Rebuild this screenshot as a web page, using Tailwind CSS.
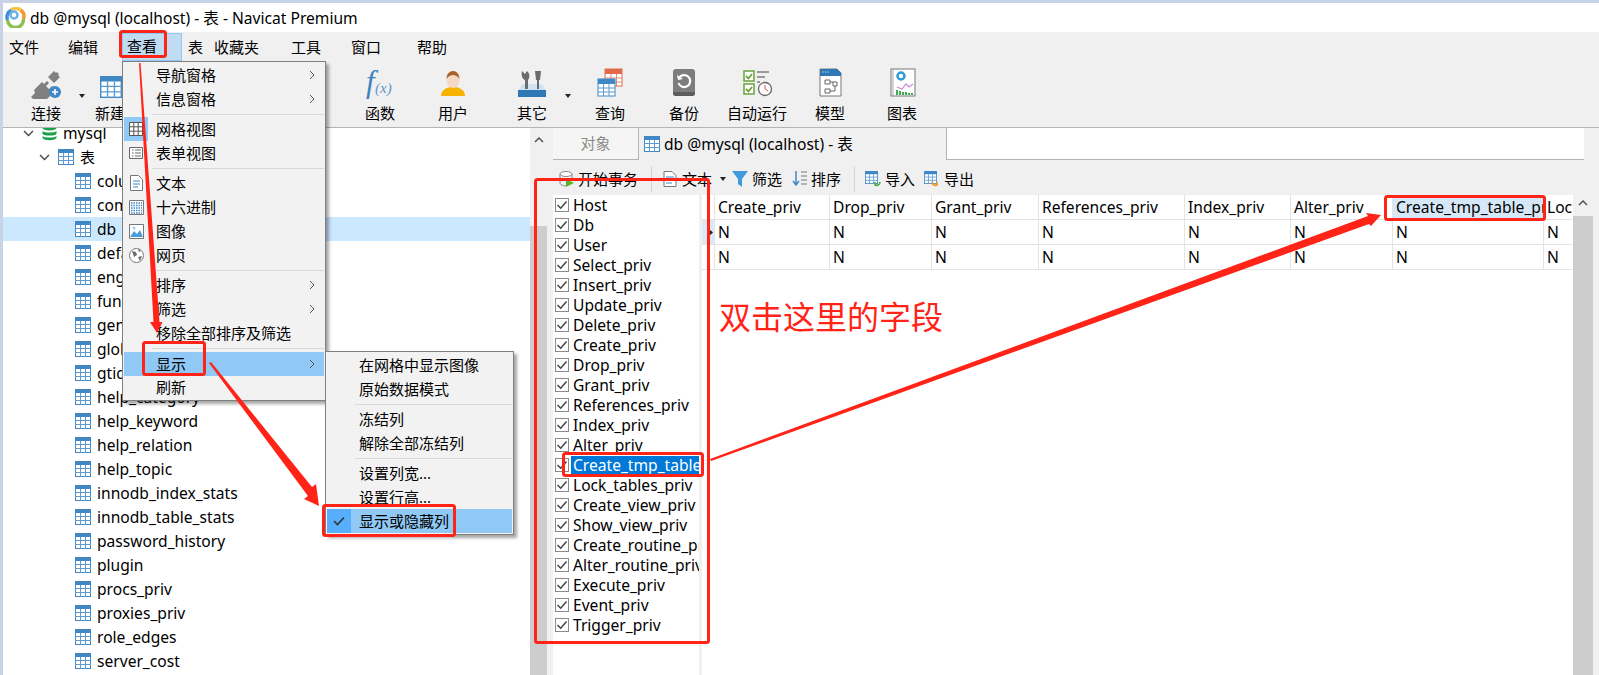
<!DOCTYPE html>
<html lang="zh-CN">
<head>
<meta charset="UTF-8">
<title>db @mysql (localhost) - 表 - Navicat Premium</title>
<script src="https://cdn.jsdelivr.net/npm/@tailwindcss/browser@4"></script>
</head>
<body class="relative w-[1599px] h-[675px] overflow-hidden bg-[#c9d3e6] pl-[3px] pt-[3px] text-[15px] leading-[24px] text-black font-['Noto_Sans','Noto_Sans_CJK_SC',sans-serif]">

<!-- shared icons -->
<svg class="hidden">
  <symbol id="tbl" viewBox="0 0 16 16">
    <rect x="0.5" y="0.5" width="15" height="15" fill="#fff" stroke="#3f87c5"/>
    <rect x="0" y="0" width="16" height="4" fill="#3f87c5"/>
    <path d="M5.5 4v12M10.5 4v12M0 7.5h16M0 11.5h16" stroke="#5d9ad0" fill="none"/>
  </symbol>
  <symbol id="chk" viewBox="0 0 14 14">
    <rect x="0.5" y="0.5" width="13" height="13" fill="#fff" stroke="#8a8a8a"/>
    <path d="M2.5 7l3.2 3.2L11.5 3.5" stroke="#444" stroke-width="1.5" fill="none"/>
  </symbol>
</svg>

<div class="flex flex-col h-[672px] bg-white">
  <!-- title bar -->
  <div class="h-[29px] flex items-center pl-[2px] bg-white text-[15.6px]">
    <svg class="w-[21px] h-[21px] shrink-0" viewBox="0 0 21 21" fill="none" stroke-width="3.500">
      <path d="M2.500 13a8 8 0 0 1 4-10" stroke="#3f8fdc"/><path d="M6.500 3a8 8 0 0 1 9 0" stroke="#f5c542"/>
      <path d="M15.500 3a8 8 0 0 1 3 9" stroke="#f29a33"/><path d="M18.500 12a8 8 0 0 1-16 1" stroke="#8cc152"/>
      <circle cx="9" cy="8" r="3.500" stroke="#6cb2ea" stroke-width="2.500"/>
    </svg>
    <span class="ml-[4px]">db @mysql (localhost) - 表 - Navicat Premium</span>
  </div>

  <!-- menu bar -->
  <div class="h-[29px] flex items-center bg-[#f0f0f0]">
    <span class="ml-[6px]">文件</span>
    <span class="ml-[29px]">编辑</span>
    <span class="ml-[24px] h-[28px] w-[60px] pl-[4px] bg-[#c0dcf3] border border-[#90c8f6]">查看</span>
    <span class="ml-[6px]">表</span>
    <span class="ml-[11px]">收藏夹</span>
    <span class="ml-[32px]">工具</span>
    <span class="ml-[30px]">窗口</span>
    <span class="ml-[36px]">帮助</span>
  </div>

  <!-- main toolbar -->
  <div class="h-[67px] flex pl-[8px] bg-[#f0f0f0] border-b border-[#b4b4b4]">
    <div class="relative w-[70px] flex flex-col items-center">
      <svg class="w-[32px] h-[30px] mt-[8px]" viewBox="0 0 32 30">
        <path d="M1 28l4-4-1-3 8-8 2 2 3-3 2 2-3 3 3 3 3-3 2 2-3 3 2 2-8 8-3-1-4 4z" fill="#808080"/>
        <path d="M18 8l6-6 2 2 1-1 2 2-1 1 2 2-6 6z" fill="#808080"/>
        <circle cx="25" cy="23" r="6" fill="#3f87c5"/><path d="M25 20v6M22 23h6" stroke="#fff" stroke-width="1.600"/>
      </svg>
      <span class="mt-[2px]">连接</span>
      <svg class="absolute left-[68px] top-[33px] w-[6px] h-[4px]" viewBox="0 0 6 4"><path d="M0 0h6L3 4z" fill="#222"/></svg>
    </div>
    <div class="w-[58px] flex flex-col items-center">
      <svg class="w-[32px] h-[30px] mt-[8px]" viewBox="0 0 32 30"><use href="#tbl" x="6" y="7" width="22" height="22"/></svg>
      <span class="mt-[2px]">新建</span>
    </div>
    <div class="ml-[206px] w-[70px] flex flex-col items-center">
      <svg class="w-[32px] h-[30px] mt-[8px]" viewBox="0 0 32 30">
        <text x="2" y="23" fill="#3c82bd" font-family="Liberation Serif" font-style="italic" font-size="31">f</text>
        <text x="11" y="24" fill="#5c97c9" font-family="Liberation Serif" font-style="italic" font-size="15">(x)</text>
      </svg>
      <span class="mt-[2px]">函数</span>
    </div>
    <div class="ml-[3px] w-[70px] flex flex-col items-center">
      <svg class="w-[32px] h-[30px] mt-[8px]" viewBox="0 0 32 30">
        <path d="M4 27c0-6 5-8 9-9h6c4 1 9 3 9 9z" fill="#f6b400"/>
        <ellipse cx="16" cy="11" rx="6.500" ry="8" fill="#f4d8c4"/>
        <path d="M9.500 10c0-5 3-8 6.500-8s6.500 3 6.500 8c-2-3-4-4-6.500-4s-4.500 1-6.500 4z" fill="#a8622a"/>
      </svg>
      <span class="mt-[2px]">用户</span>
    </div>
    <div class="relative ml-[9px] w-[70px] flex flex-col items-center">
      <svg class="w-[32px] h-[30px] mt-[8px]" viewBox="0 0 32 30">
        <path d="M6 15h20l4 7H2z" fill="#cfe2f2"/><rect x="2" y="21" width="28" height="7" fill="#2f78b7"/>
        <path d="M9 20V11C6 10 5 6 6 2l3 3 2-3c3 2 3 7 1 9v9zM21 20V11h-1l-1-9h6l-1 9h-1v9z" fill="#6b6b6b"/>
      </svg>
      <span class="mt-[2px]">其它</span>
      <svg class="absolute left-[68px] top-[33px] w-[6px] h-[4px]" viewBox="0 0 6 4"><path d="M0 0h6L3 4z" fill="#222"/></svg>
    </div>
    <div class="ml-[8px] w-[70px] flex flex-col items-center">
      <svg class="w-[32px] h-[30px] mt-[7px]" viewBox="0 0 32 30">
        <rect x="11" y="1" width="17" height="17" fill="#fff" stroke="#e2694a"/><rect x="11" y="1" width="17" height="5" fill="#e2694a"/>
        <path d="M17 6v12M22.500 6v12M11 10h17M11 14h17" stroke="#e2897a" fill="none"/>
        <rect x="4" y="11" width="17" height="17" fill="#fff" stroke="#3f87c5"/><rect x="4" y="11" width="17" height="5" fill="#3f87c5"/>
        <path d="M9.500 16v12M15 16v12M4 20h17M4 24h17" stroke="#5d9ad0" fill="none"/>
      </svg>
      <span class="mt-[3px]">查询</span>
    </div>
    <div class="ml-[4px] w-[70px] flex flex-col items-center">
      <svg class="w-[32px] h-[30px] mt-[7px]" viewBox="0 0 32 30">
        <rect x="5" y="1" width="22" height="27" rx="3" fill="#7d7d7d"/>
        <path d="M5 24h22v1a3 3 0 0 1-3 3H8a3 3 0 0 1-3-3z" fill="#5d5d5d"/>
        <path d="M11 10a6 6 0 1 1-.5 5" stroke="#fff" stroke-width="2.200" fill="none"/><path d="M9 7l1 5 5-1z" fill="#fff"/>
      </svg>
      <span class="mt-[3px]">备份</span>
    </div>
    <div class="ml-[-2px] w-[80px] flex flex-col items-center">
      <svg class="w-[32px] h-[30px] mt-[7px]" viewBox="0 0 32 30">
        <rect x="3" y="3" width="10" height="10" fill="#fff" stroke="#6aa33b" stroke-width="1.500"/><path d="M5 8l2.500 2.500L11 6" stroke="#6aa33b" stroke-width="1.800" fill="none"/>
        <rect x="3" y="16" width="10" height="10" fill="#fff" stroke="#6aa33b" stroke-width="1.500"/><path d="M5 21l2.500 2.500L11 19" stroke="#6aa33b" stroke-width="1.800" fill="none"/>
        <path d="M16 4h12M16 9h8M16 14h3" stroke="#999" stroke-width="1.800"/>
        <circle cx="24" cy="21" r="6.500" fill="#fff" stroke="#666" stroke-width="1.300"/><path d="M24 17v4l3 2" stroke="#d0574a" fill="none"/>
      </svg>
      <span class="mt-[3px]">自动运行</span>
    </div>
    <div class="w-[66px] flex flex-col items-center">
      <svg class="w-[32px] h-[30px] mt-[7px]" viewBox="0 0 32 30">
        <path d="M6 1h17l4 4v23H6z" fill="#fff" stroke="#777"/><path d="M6 1h17l4 4v3H6z" fill="#2f78b7"/>
        <path d="M8.500 4h1M11 4h1M13.500 4h1" stroke="#fff"/>
        <path d="M11 12h5v4h-5zM19 14h4v4h-4zM11 21h5v4h-5zM16 14h3M21 18v5h-5" stroke="#666" fill="none"/>
      </svg>
      <span class="mt-[3px]">模型</span>
    </div>
    <div class="ml-[7px] w-[64px] flex flex-col items-center">
      <svg class="w-[32px] h-[30px] mt-[7px]" viewBox="0 0 32 30">
        <rect x="5" y="1" width="24" height="27" fill="#fff" stroke="#777"/><path d="M7 1v27" stroke="#aaa"/>
        <circle cx="15" cy="8" r="3.500" fill="none" stroke="#2f9bd6" stroke-width="2.500"/>
        <path d="M11 19l5 2 4-5 3 3 4-3" stroke="#c88ad8" stroke-width="1.200" fill="none"/>
        <path d="M11 22v5M14 23v4M17 24v3M20 24v3M23 25v2M26 25v2" stroke="#3cab53" stroke-width="2"/>
      </svg>
      <span class="mt-[3px]">图表</span>
    </div>
  </div>

  <div class="flex-1 min-h-0 flex">
    <!-- object tree -->
    <div class="w-[527px] overflow-hidden bg-white text-[15.6px]">
      <ul class="mt-[-7px] leading-[24px]">
        <li class="h-[24px] flex items-center pl-[20px]">
          <svg class="w-[11px] h-[7px]" viewBox="0 0 11 7"><path d="M1 1l4.500 4.500L10 1" stroke="#444" stroke-width="1.400" fill="none"/></svg>
          <svg class="ml-[8px] w-[15px] h-[16px]" viewBox="0 0 15 16"><ellipse cx="7.500" cy="3" rx="7" ry="2.500" fill="#19a04b"/><path d="M.5 6c2 2 12 2 14 0v3c-2 2-12 2-14 0zM.5 11c2 2 12 2 14 0v2c-2 3-12 3-14 0z" fill="#19a04b"/></svg>
          <span class="ml-[6px]">mysql</span>
        </li>
        <li class="h-[24px] flex items-center pl-[36px]">
          <svg class="w-[11px] h-[7px]" viewBox="0 0 11 7"><path d="M1 1l4.500 4.500L10 1" stroke="#444" stroke-width="1.400" fill="none"/></svg>
          <svg class="ml-[8px] w-[16px] h-[16px]"><use href="#tbl"/></svg><span class="ml-[6px] text-[15px]">表</span>
        </li>
        <li class="h-[24px] flex items-center pl-[72px]"><svg class="w-[16px] h-[16px]"><use href="#tbl"/></svg><span class="ml-[6px]">columns_priv</span></li>
        <li class="h-[24px] flex items-center pl-[72px]"><svg class="w-[16px] h-[16px]"><use href="#tbl"/></svg><span class="ml-[6px]">component</span></li>
        <li class="h-[24px] flex items-center pl-[72px] bg-[#cce8ff]"><svg class="w-[16px] h-[16px]"><use href="#tbl"/></svg><span class="ml-[6px]">db</span></li>
        <li class="h-[24px] flex items-center pl-[72px]"><svg class="w-[16px] h-[16px]"><use href="#tbl"/></svg><span class="ml-[6px]">default_roles</span></li>
        <li class="h-[24px] flex items-center pl-[72px]"><svg class="w-[16px] h-[16px]"><use href="#tbl"/></svg><span class="ml-[6px]">engine_cost</span></li>
        <li class="h-[24px] flex items-center pl-[72px]"><svg class="w-[16px] h-[16px]"><use href="#tbl"/></svg><span class="ml-[6px]">func</span></li>
        <li class="h-[24px] flex items-center pl-[72px]"><svg class="w-[16px] h-[16px]"><use href="#tbl"/></svg><span class="ml-[6px]">general_log</span></li>
        <li class="h-[24px] flex items-center pl-[72px]"><svg class="w-[16px] h-[16px]"><use href="#tbl"/></svg><span class="ml-[6px]">global_grants</span></li>
        <li class="h-[24px] flex items-center pl-[72px]"><svg class="w-[16px] h-[16px]"><use href="#tbl"/></svg><span class="ml-[6px]">gtid_executed</span></li>
        <li class="h-[24px] flex items-center pl-[72px]"><svg class="w-[16px] h-[16px]"><use href="#tbl"/></svg><span class="ml-[6px]">help_category</span></li>
        <li class="h-[24px] flex items-center pl-[72px]"><svg class="w-[16px] h-[16px]"><use href="#tbl"/></svg><span class="ml-[6px]">help_keyword</span></li>
        <li class="h-[24px] flex items-center pl-[72px]"><svg class="w-[16px] h-[16px]"><use href="#tbl"/></svg><span class="ml-[6px]">help_relation</span></li>
        <li class="h-[24px] flex items-center pl-[72px]"><svg class="w-[16px] h-[16px]"><use href="#tbl"/></svg><span class="ml-[6px]">help_topic</span></li>
        <li class="h-[24px] flex items-center pl-[72px]"><svg class="w-[16px] h-[16px]"><use href="#tbl"/></svg><span class="ml-[6px]">innodb_index_stats</span></li>
        <li class="h-[24px] flex items-center pl-[72px]"><svg class="w-[16px] h-[16px]"><use href="#tbl"/></svg><span class="ml-[6px]">innodb_table_stats</span></li>
        <li class="h-[24px] flex items-center pl-[72px]"><svg class="w-[16px] h-[16px]"><use href="#tbl"/></svg><span class="ml-[6px]">password_history</span></li>
        <li class="h-[24px] flex items-center pl-[72px]"><svg class="w-[16px] h-[16px]"><use href="#tbl"/></svg><span class="ml-[6px]">plugin</span></li>
        <li class="h-[24px] flex items-center pl-[72px]"><svg class="w-[16px] h-[16px]"><use href="#tbl"/></svg><span class="ml-[6px]">procs_priv</span></li>
        <li class="h-[24px] flex items-center pl-[72px]"><svg class="w-[16px] h-[16px]"><use href="#tbl"/></svg><span class="ml-[6px]">proxies_priv</span></li>
        <li class="h-[24px] flex items-center pl-[72px]"><svg class="w-[16px] h-[16px]"><use href="#tbl"/></svg><span class="ml-[6px]">role_edges</span></li>
        <li class="h-[24px] flex items-center pl-[72px]"><svg class="w-[16px] h-[16px]"><use href="#tbl"/></svg><span class="ml-[6px]">server_cost</span></li>
      </ul>
    </div>

    <!-- tree scrollbar -->
    <div class="w-[23px] flex flex-col bg-[#f0f0f0]">
      <div class="h-[98px] pt-[9px] pl-[4px]">
        <svg class="w-[10px] h-[6px]" viewBox="0 0 10 6"><path d="M1 5l4-4 4 4" stroke="#555" stroke-width="1.500" fill="none"/></svg>
      </div>
      <div class="flex-1 w-[17px] bg-[#cdcdcd]"></div>
    </div>

    <!-- right panel -->
    <div class="flex-1 min-w-0 flex flex-col bg-[#f0f0f0]">
      <div class="h-[32px] flex">
        <div class="w-[86px] bg-[#f5f5f5] border-r border-b border-[#b4b4b4] text-center text-[#8a8a8a] leading-[30px]">对象</div>
        <div class="w-[307px] bg-[#f0f0f0] flex items-center pl-[5px] pb-[1px] text-[15.6px]">
          <svg class="w-[16px] h-[16px]"><use href="#tbl"/></svg><span class="ml-[4px]">db @mysql (localhost) - 表</span>
        </div>
        <div class="w-[638px] bg-white border-l border-b border-[#b4b4b4]"></div>
      </div>

      <div class="h-[35px] pt-[3px] flex items-center">
        <svg class="ml-[6px] w-[16px] h-[16px]" viewBox="0 0 16 16"><ellipse cx="7" cy="3" rx="6" ry="2.500" fill="#fff" stroke="#888"/><path d="M1 3v9c0 2 4 3 6 3M13 3v4M1 7.500c1 1.500 9 2 12 0" stroke="#888" fill="none"/><path d="M7 8l8 4-8 4z" fill="#5ab52d"/></svg>
        <span class="ml-[3px]">开始事务</span>
        <span class="ml-[13px] h-[26px] w-px bg-[#d4d4d4]"></span>
        <svg class="ml-[11px] w-[14px] h-[16px]" viewBox="0 0 14 16"><path d="M1 .5h8l4 4V15.500H1z" fill="#fff" stroke="#777"/><path d="M3 6h8M3 9h8M3 12h6" stroke="#3f87c5"/></svg>
        <span class="ml-[5px]">文本</span>
        <svg class="ml-[8px] w-[6px] h-[4px]" viewBox="0 0 6 4"><path d="M0 0h6L3 4z" fill="#222"/></svg>
        <svg class="ml-[6px] w-[16px] h-[16px]" viewBox="0 0 16 16"><path d="M0 0h16l-6 8v8l-4-3V8z" fill="#3f9bdc"/></svg>
        <span class="ml-[4px]">筛选</span>
        <svg class="ml-[10px] w-[16px] h-[16px]" viewBox="0 0 16 16"><path d="M4 0v13M1 10l3 4 3-4" stroke="#3f87c5" stroke-width="1.500" fill="none"/><path d="M9 1h6M9 5h6M9 9h6M9 13h6" stroke="#777"/></svg>
        <span class="ml-[3px]">排序</span>
        <span class="ml-[13px] h-[26px] w-px bg-[#d4d4d4]"></span>
        <svg class="ml-[10px] w-[16px] h-[16px]" viewBox="0 0 16 16"><use href="#tbl" width="13" height="13"/><path d="M15 11c0 3-3 4-5 3M10 11v3h3" stroke="#4cae4c" stroke-width="1.600" fill="none"/></svg>
        <span class="ml-[4px]">导入</span>
        <svg class="ml-[9px] w-[16px] h-[16px]" viewBox="0 0 16 16"><use href="#tbl" width="13" height="13"/><path d="M8 11c0 3 3 4 5 3M13 11v3h-3" stroke="#f0961e" stroke-width="1.600" fill="none"/></svg>
        <span class="ml-[4px]">导出</span>
      </div>

      <div class="flex-1 min-h-0 flex">
        <!-- column chooser -->
        <ul class="w-[146px] bg-white leading-[20px] overflow-hidden text-[15.6px]">
          <li class="h-[20px] flex items-center pl-[2px]"><svg class="shrink-0 w-[14px] h-[14px]"><use href="#chk"/></svg><span class="ml-[4px] whitespace-nowrap">Host</span></li>
          <li class="h-[20px] flex items-center pl-[2px]"><svg class="shrink-0 w-[14px] h-[14px]"><use href="#chk"/></svg><span class="ml-[4px] whitespace-nowrap">Db</span></li>
          <li class="h-[20px] flex items-center pl-[2px]"><svg class="shrink-0 w-[14px] h-[14px]"><use href="#chk"/></svg><span class="ml-[4px] whitespace-nowrap">User</span></li>
          <li class="h-[20px] flex items-center pl-[2px]"><svg class="shrink-0 w-[14px] h-[14px]"><use href="#chk"/></svg><span class="ml-[4px] whitespace-nowrap">Select_priv</span></li>
          <li class="h-[20px] flex items-center pl-[2px]"><svg class="shrink-0 w-[14px] h-[14px]"><use href="#chk"/></svg><span class="ml-[4px] whitespace-nowrap">Insert_priv</span></li>
          <li class="h-[20px] flex items-center pl-[2px]"><svg class="shrink-0 w-[14px] h-[14px]"><use href="#chk"/></svg><span class="ml-[4px] whitespace-nowrap">Update_priv</span></li>
          <li class="h-[20px] flex items-center pl-[2px]"><svg class="shrink-0 w-[14px] h-[14px]"><use href="#chk"/></svg><span class="ml-[4px] whitespace-nowrap">Delete_priv</span></li>
          <li class="h-[20px] flex items-center pl-[2px]"><svg class="shrink-0 w-[14px] h-[14px]"><use href="#chk"/></svg><span class="ml-[4px] whitespace-nowrap">Create_priv</span></li>
          <li class="h-[20px] flex items-center pl-[2px]"><svg class="shrink-0 w-[14px] h-[14px]"><use href="#chk"/></svg><span class="ml-[4px] whitespace-nowrap">Drop_priv</span></li>
          <li class="h-[20px] flex items-center pl-[2px]"><svg class="shrink-0 w-[14px] h-[14px]"><use href="#chk"/></svg><span class="ml-[4px] whitespace-nowrap">Grant_priv</span></li>
          <li class="h-[20px] flex items-center pl-[2px]"><svg class="shrink-0 w-[14px] h-[14px]"><use href="#chk"/></svg><span class="ml-[4px] whitespace-nowrap">References_priv</span></li>
          <li class="h-[20px] flex items-center pl-[2px]"><svg class="shrink-0 w-[14px] h-[14px]"><use href="#chk"/></svg><span class="ml-[4px] whitespace-nowrap">Index_priv</span></li>
          <li class="h-[20px] flex items-center pl-[2px]"><svg class="shrink-0 w-[14px] h-[14px]"><use href="#chk"/></svg><span class="ml-[4px] whitespace-nowrap">Alter_priv</span></li>
          <li class="h-[20px] flex items-center pl-[2px]"><svg class="shrink-0 w-[14px] h-[14px]"><use href="#chk"/></svg><span class="ml-[2px] pl-[2px] h-[18px] leading-[18px] flex-1 min-w-0 overflow-hidden bg-[#0078d7] text-white whitespace-nowrap">Create_tmp_table_priv</span></li>
          <li class="h-[20px] flex items-center pl-[2px]"><svg class="shrink-0 w-[14px] h-[14px]"><use href="#chk"/></svg><span class="ml-[4px] whitespace-nowrap">Lock_tables_priv</span></li>
          <li class="h-[20px] flex items-center pl-[2px]"><svg class="shrink-0 w-[14px] h-[14px]"><use href="#chk"/></svg><span class="ml-[4px] whitespace-nowrap">Create_view_priv</span></li>
          <li class="h-[20px] flex items-center pl-[2px]"><svg class="shrink-0 w-[14px] h-[14px]"><use href="#chk"/></svg><span class="ml-[4px] whitespace-nowrap">Show_view_priv</span></li>
          <li class="h-[20px] flex items-center pl-[2px]"><svg class="shrink-0 w-[14px] h-[14px]"><use href="#chk"/></svg><span class="ml-[4px] whitespace-nowrap">Create_routine_priv</span></li>
          <li class="h-[20px] flex items-center pl-[2px]"><svg class="shrink-0 w-[14px] h-[14px]"><use href="#chk"/></svg><span class="ml-[4px] whitespace-nowrap">Alter_routine_priv</span></li>
          <li class="h-[20px] flex items-center pl-[2px]"><svg class="shrink-0 w-[14px] h-[14px]"><use href="#chk"/></svg><span class="ml-[4px] whitespace-nowrap">Execute_priv</span></li>
          <li class="h-[20px] flex items-center pl-[2px]"><svg class="shrink-0 w-[14px] h-[14px]"><use href="#chk"/></svg><span class="ml-[4px] whitespace-nowrap">Event_priv</span></li>
          <li class="h-[20px] flex items-center pl-[2px]"><svg class="shrink-0 w-[14px] h-[14px]"><use href="#chk"/></svg><span class="ml-[4px] whitespace-nowrap">Trigger_priv</span></li>
        </ul>
        <div class="w-[3px] bg-[#f0f0f0]"></div>

        <!-- data grid -->
        <div class="w-[871px] bg-white text-[15.6px]">
          <div class="grid grid-cols-[13px_115px_102px_107px_146px_106px_102px_151px_29px] h-[25px] leading-[24px] border-b border-[#e4e4e4]">
            <div class="border-r border-[#e4e4e4]"></div>
            <div class="pl-[3px] border-r border-[#e4e4e4]">Create_priv</div>
            <div class="pl-[3px] border-r border-[#e4e4e4]">Drop_priv</div>
            <div class="pl-[3px] border-r border-[#e4e4e4]">Grant_priv</div>
            <div class="pl-[3px] border-r border-[#e4e4e4]">References_priv</div>
            <div class="pl-[3px] border-r border-[#e4e4e4]">Index_priv</div>
            <div class="pl-[3px] border-r border-[#e4e4e4]">Alter_priv</div>
            <div class="pl-[3px] border-r border-[#e4e4e4] bg-[#d6e8f8] overflow-hidden whitespace-nowrap">Create_tmp_table_priv</div>
            <div class="pl-[3px] overflow-hidden whitespace-nowrap">Lock_tables_priv</div>
          </div>
          <div class="grid grid-cols-[13px_115px_102px_107px_146px_106px_102px_151px_29px] h-[25px] leading-[24px] border-b border-[#e4e4e4]">
            <div class="relative border-r border-[#e4e4e4] bg-[#dce9f6]"><svg class="absolute left-[7px] top-[9px] w-[4px] h-[7px]" viewBox="0 0 4 7"><path d="M0 0l4 3.500L0 7z" fill="#222"/></svg></div>
            <div class="pl-[3px] border-r border-[#e4e4e4]">N</div>
            <div class="pl-[3px] border-r border-[#e4e4e4]">N</div>
            <div class="pl-[3px] border-r border-[#e4e4e4]">N</div>
            <div class="pl-[3px] border-r border-[#e4e4e4]">N</div>
            <div class="pl-[3px] border-r border-[#e4e4e4]">N</div>
            <div class="pl-[3px] border-r border-[#e4e4e4]">N</div>
            <div class="pl-[3px] border-r border-[#e4e4e4]">N</div>
            <div class="pl-[3px]">N</div>
          </div>
          <div class="grid grid-cols-[13px_115px_102px_107px_146px_106px_102px_151px_29px] h-[25px] leading-[24px] border-b border-[#e4e4e4]">
            <div class="border-r border-[#e4e4e4]"></div>
            <div class="pl-[3px] border-r border-[#e4e4e4]">N</div>
            <div class="pl-[3px] border-r border-[#e4e4e4]">N</div>
            <div class="pl-[3px] border-r border-[#e4e4e4]">N</div>
            <div class="pl-[3px] border-r border-[#e4e4e4]">N</div>
            <div class="pl-[3px] border-r border-[#e4e4e4]">N</div>
            <div class="pl-[3px] border-r border-[#e4e4e4]">N</div>
            <div class="pl-[3px] border-r border-[#e4e4e4]">N</div>
            <div class="pl-[3px]">N</div>
          </div>
        </div>

        <!-- grid scrollbar -->
        <div class="w-[20px] flex flex-col bg-[#f0f0f0]">
          <div class="h-[21px] pt-[5px] pl-[5px]">
            <svg class="w-[10px] h-[6px]" viewBox="0 0 10 6"><path d="M1 5l4-4 4 4" stroke="#555" stroke-width="1.500" fill="none"/></svg>
          </div>
          <div class="flex-1 bg-[#cdcdcd]"></div>
        </div>
      </div>
    </div>
  </div>
</div>

<!-- 查看 menu -->
<div class="absolute left-[122px] top-[61px] w-[204px] h-[340px] pt-[1px] bg-[#f2f2f2] border border-[#7f7f7f] shadow-[3px_3px_3px_rgba(0,0,0,0.35)]">
  <div class="h-[24px] flex items-center pl-[33px] pr-[10px]"><span class="flex-1">导航窗格</span><svg class="w-[6px] h-[10px]" viewBox="0 0 6 10"><path d="M1 1l4 4-4 4" stroke="#555" fill="none"/></svg></div>
  <div class="h-[24px] flex items-center pl-[33px] pr-[10px]"><span class="flex-1">信息窗格</span><svg class="w-[6px] h-[10px]" viewBox="0 0 6 10"><path d="M1 1l4 4-4 4" stroke="#555" fill="none"/></svg></div>
  <div class="h-[6px] ml-[29px] mr-[1px] flex items-center"><div class="h-px w-full bg-[#d8d8d8]"></div></div>
  <div class="h-[24px] flex items-center pr-[10px]">
    <div class="ml-[1px] w-[24px] h-[24px] bg-[#90c8f6] flex items-center justify-center"><svg class="w-[14px] h-[14px]" viewBox="0 0 14 14"><path d="M.5.5h13v13H.5zM4.800.5v13M9.200.5v13M.5 4.800h13M.5 9.200h13" stroke="#555" fill="#fff"/></svg></div>
    <span class="ml-[8px]">网格视图</span>
  </div>
  <div class="h-[24px] flex items-center">
    <div class="ml-[1px] w-[24px] flex justify-center"><svg class="w-[14px] h-[12px]" viewBox="0 0 14 12"><path d="M.5.5h13v11H.5z" fill="#fff" stroke="#666"/><path d="M3 3h1.500M3 6h1.500M3 9h1.500M6 3h6M6 6h6M6 9h6" stroke="#666"/></svg></div>
    <span class="ml-[8px]">表单视图</span>
  </div>
  <div class="h-[6px] ml-[29px] mr-[1px] flex items-center"><div class="h-px w-full bg-[#d8d8d8]"></div></div>
  <div class="h-[24px] flex items-center">
    <div class="ml-[1px] w-[24px] flex justify-center"><svg class="w-[13px] h-[16px]" viewBox="0 0 13 16"><path d="M.5.5h8l4 4v11H.5z" fill="#fff" stroke="#777"/><path d="M3 6h7M3 9h7M3 12h5" stroke="#3f87c5"/></svg></div>
    <span class="ml-[8px]">文本</span>
  </div>
  <div class="h-[24px] flex items-center">
    <div class="ml-[1px] w-[24px] flex justify-center"><svg class="w-[15px] h-[15px]" viewBox="0 0 15 15"><path d="M.5.5h14v14H.5z" fill="#fff" stroke="#777"/><path d="M2 3h11M2 5.500h11M2 8h11M2 10.500h11M2 13h11" stroke="#3f87c5" stroke-dasharray="1.500 1" stroke-width="1.500"/></svg></div>
    <span class="ml-[8px]">十六进制</span>
  </div>
  <div class="h-[24px] flex items-center">
    <div class="ml-[1px] w-[24px] flex justify-center"><svg class="w-[15px] h-[15px]" viewBox="0 0 15 15"><path d="M.5.5h14v14H.5z" fill="#fff" stroke="#777"/><path d="M1 13l4-6 3 3 3-4 3 7z" fill="#4d9fdc"/><circle cx="5" cy="4" r="1.500" fill="#9ccbed"/></svg></div>
    <span class="ml-[8px]">图像</span>
  </div>
  <div class="h-[24px] flex items-center">
    <div class="ml-[1px] w-[24px] flex justify-center"><svg class="w-[15px] h-[15px]" viewBox="0 0 15 15"><circle cx="7.500" cy="7.500" r="7" fill="#fff" stroke="#777"/><path d="M3 3l4 1 1 3-3 2zM9 9l4-1-2 5zM9 1l3 2-2 1z" fill="#6d6d6d"/></svg></div>
    <span class="ml-[8px]">网页</span>
  </div>
  <div class="h-[6px] ml-[29px] mr-[1px] flex items-center"><div class="h-px w-full bg-[#d8d8d8]"></div></div>
  <div class="h-[24px] flex items-center pl-[33px] pr-[10px]"><span class="flex-1">排序</span><svg class="w-[6px] h-[10px]" viewBox="0 0 6 10"><path d="M1 1l4 4-4 4" stroke="#555" fill="none"/></svg></div>
  <div class="h-[24px] flex items-center pl-[33px] pr-[10px]"><span class="flex-1">筛选</span><svg class="w-[6px] h-[10px]" viewBox="0 0 6 10"><path d="M1 1l4 4-4 4" stroke="#555" fill="none"/></svg></div>
  <div class="h-[24px] flex items-center pl-[33px]">移除全部排序及筛选</div>
  <div class="h-[7px] ml-[29px] mr-[1px] flex items-center"><div class="h-px w-full bg-[#d8d8d8]"></div></div>
  <div class="h-[24px] mx-[1px] flex items-center pl-[32px] pr-[9px] bg-[#90c8f6]"><span class="flex-1">显示</span><svg class="w-[6px] h-[10px]" viewBox="0 0 6 10"><path d="M1 1l4 4-4 4" stroke="#555" fill="none"/></svg></div>
  <div class="h-[24px] pb-[2px] flex items-center pl-[33px]">刷新</div>
</div>

<!-- 显示 submenu -->
<div class="absolute left-[325px] top-[351px] w-[189px] h-[184px] pt-[1px] bg-[#f2f2f2] border border-[#7f7f7f] shadow-[3px_3px_3px_rgba(0,0,0,0.35)]">
  <div class="h-[24px] flex items-center pl-[33px]">在网格中显示图像</div>
  <div class="h-[24px] flex items-center pl-[33px]">原始数据模式</div>
  <div class="h-[6px] ml-[29px] mr-[1px] flex items-center"><div class="h-px w-full bg-[#d8d8d8]"></div></div>
  <div class="h-[24px] flex items-center pl-[33px]">冻结列</div>
  <div class="h-[24px] flex items-center pl-[33px]">解除全部冻结列</div>
  <div class="h-[6px] ml-[29px] mr-[1px] flex items-center"><div class="h-px w-full bg-[#d8d8d8]"></div></div>
  <div class="h-[24px] flex items-center pl-[33px]">设置列宽...</div>
  <div class="h-[24px] flex items-center pl-[33px]">设置行高...</div>
  <div class="h-[24px] mx-[1px] flex items-center bg-[#90c8f6]">
    <div class="w-[24px] h-[24px] bg-[#57aefc] flex items-center justify-center"><svg class="w-[12px] h-[10px]" viewBox="0 0 12 10"><path d="M1 5l3.500 3.500L11 1.500" stroke="#333" stroke-width="1.600" fill="none"/></svg></div>
    <span class="ml-[8px]">显示或隐藏列</span>
  </div>
</div>

<!-- red hand-drawn annotations -->
<svg class="absolute left-0 top-0 w-[1599px] h-[675px] pointer-events-none" viewBox="0 0 1599 675" fill="none">
  <g stroke="#ff2318" stroke-width="3">
    <rect x="120.500" y="31.500" width="45" height="25" rx="2"/>
    <rect x="143.500" y="342.500" width="61" height="32" rx="2"/>
    <rect x="323.500" y="505.500" width="131" height="30" rx="2"/>
    <rect x="535.500" y="179.500" width="173" height="463" rx="2"/>
    <rect x="563.500" y="453.500" width="139" height="22" rx="2"/>
    <rect x="1385.500" y="196.500" width="159" height="23" rx="2"/>
  </g>
  <g fill="#ff2318">
    <path d="M139 63l1.500 0L159.500 322l3 0L157 333 150 322l3.500 0z"/>
    <path d="M209 363l2-1L312 487l4-3 3 22-15-7 4-3z"/>
    <path d="M711 461l-1-2L1368 216l-2-3 15 2-10 11-2-2z"/>
  </g>
  <text x="719" y="329" fill="#ff2318" font-size="32" font-family="'Noto Sans CJK SC',sans-serif">双击这里的字段</text>
</svg>
</body>
</html>
